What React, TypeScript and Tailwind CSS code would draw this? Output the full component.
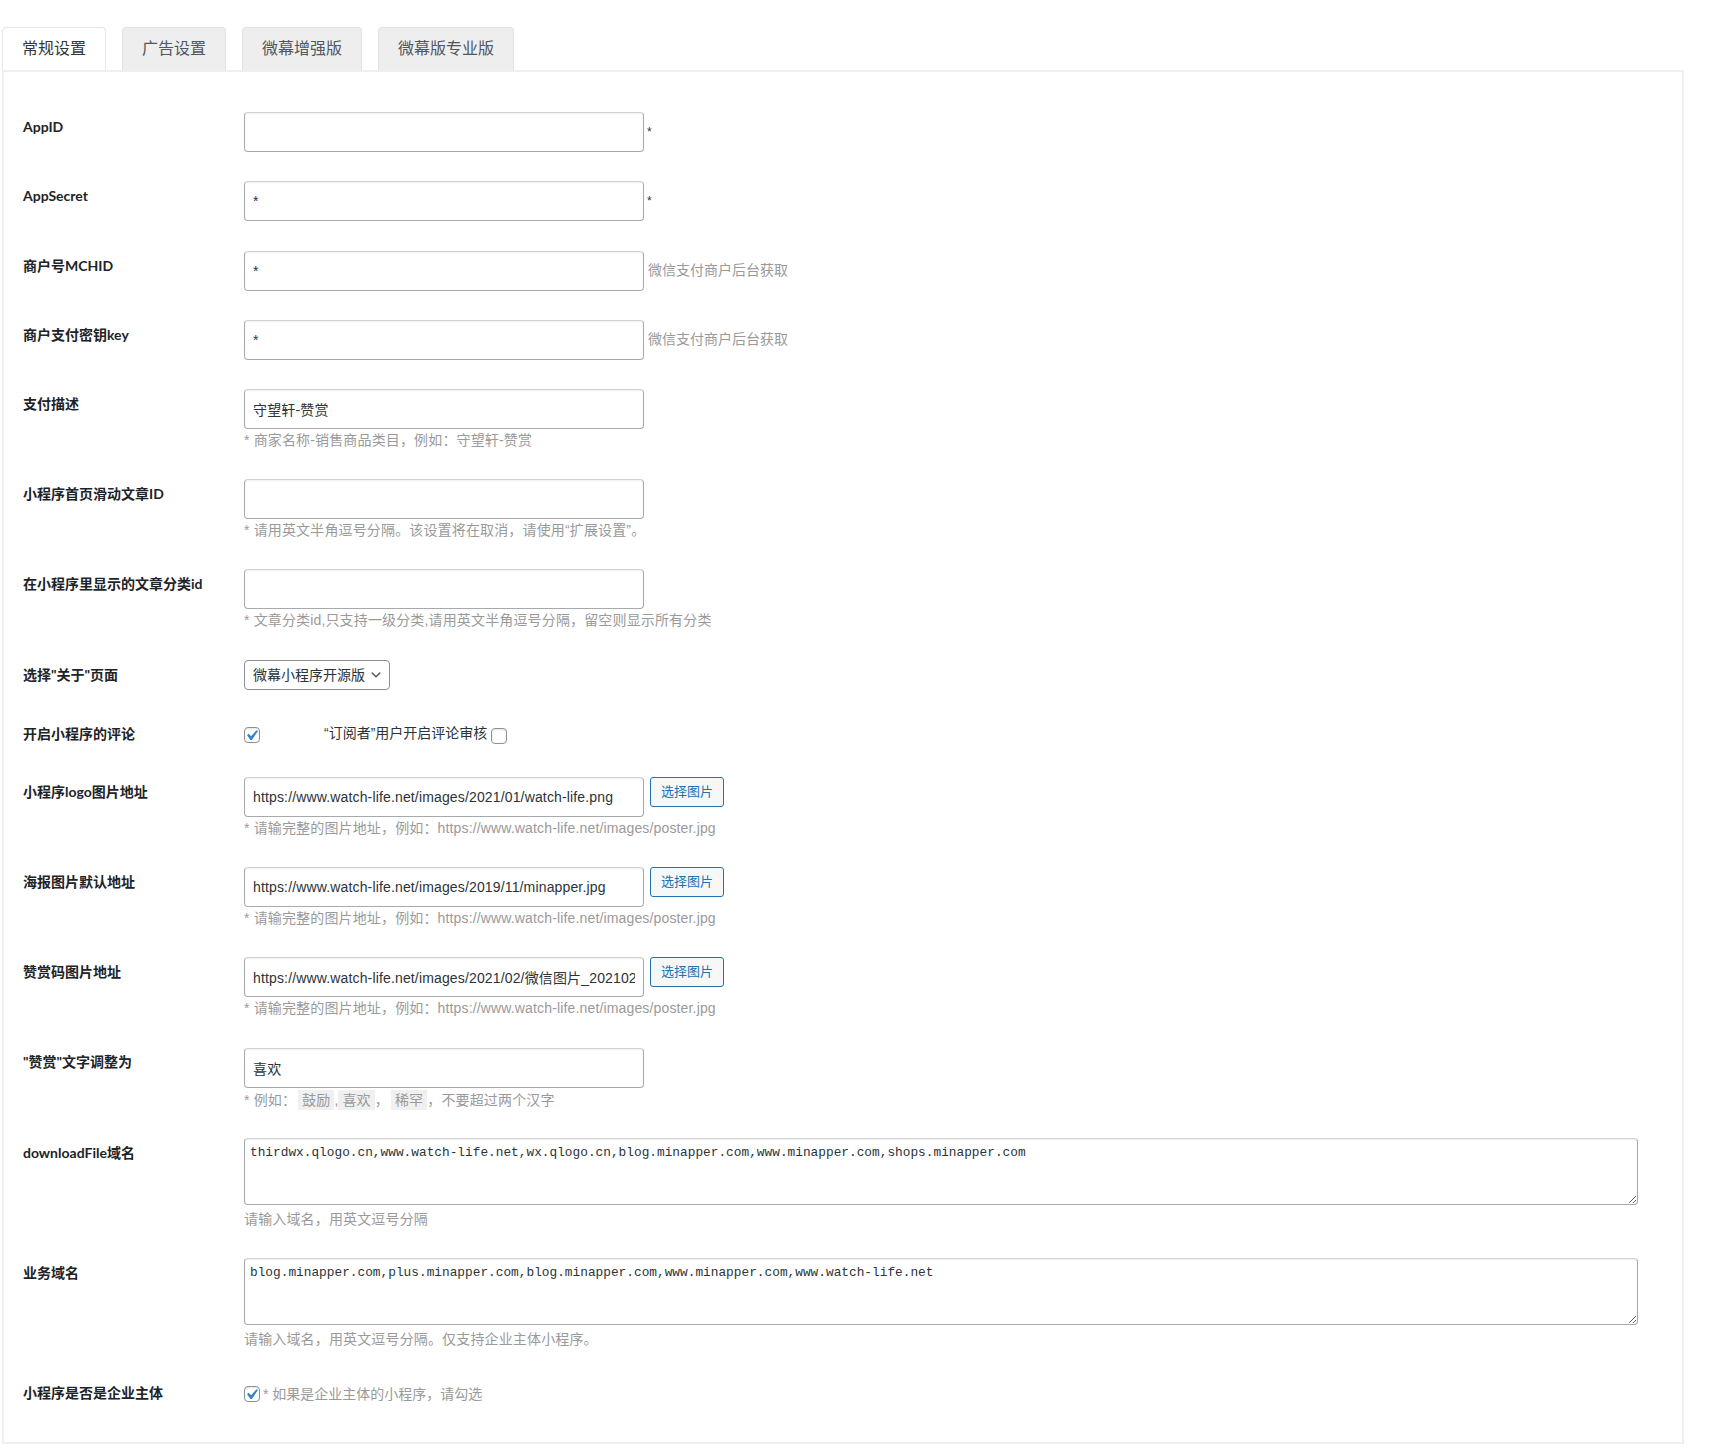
import React from "react";

const FONT = '"Liberation Sans", "Noto Sans CJK SC", sans-serif';
const LABEL_FONT = 'Lato, "Noto Sans CJK SC", sans-serif';

function Row({ label, children }: { label: string; children: React.ReactNode }) {
  return (
    <div className="flex">
      <div
        className="w-[221px] shrink-0 pt-[20.5px] text-[14px] leading-[18px] font-bold text-[#1d2327]"
        style={{ fontFamily: LABEL_FONT }}
      >
        {label}
      </div>
      <div className="py-[14.6px] min-w-0">{children}</div>
    </div>
  );
}

function TextInput({ value = "" }: { value?: string }) {
  return (
    <input
      type="text"
      defaultValue={value}
      className="block w-[400px] h-[40px] px-[8px] rounded-[4px] border border-[#a7aaad] border-t-[#cfd1d4] shadow-[inset_0_1px_2px_rgba(0,0,0,0.06)] bg-white text-[14px] tracking-[0.15px] text-[#2c3338] outline-none"
    />
  );
}

function Help({ children, className = "" }: { children: React.ReactNode; className?: string }) {
  return <p className={`text-[14px] leading-[19px] tracking-[0.15px] text-[#9a9a9a] ${className}`}>{children}</p>;
}

function Chip({ children, className = "" }: { children: React.ReactNode; className?: string }) {
  return (
    <code
      className={`inline-block bg-[#f0f0f1] px-[4px] leading-[20px] text-[14px] text-[#9a9a9a] ${className}`}
      style={{ fontFamily: FONT }}
    >
      {children}
    </code>
  );
}

function Checkbox({ checked }: { checked?: boolean }) {
  return (
    <span className="relative inline-block w-[16px] h-[16px] shrink-0 rounded-[4px] border border-[#8c8f94] bg-white shadow-[inset_0_1px_2px_rgba(0,0,0,0.1)]">
      {checked && (
        <svg className="absolute left-[-4px] top-[-3px] w-[21px] h-[21px]" viewBox="0 0 20 20">
          <path d="M14.83 4.89l1.34.94-5.81 8.38H9.02L5.78 9.67l1.34-1.25 2.57 2.4z" fill="#3582c4" />
        </svg>
      )}
    </span>
  );
}

function PickButton() {
  return (
    <button
      type="button"
      className="ml-[6px] h-[30px] px-[10px] shrink-0 rounded-[3px] border border-[#2271b1] bg-[#f6f7f7] text-[13px] leading-[28px] text-[#2271b1]"
    >
      选择图片
    </button>
  );
}

function DomainArea({ value }: { value: string }) {
  return (
    <textarea
      defaultValue={value}
      className="block w-[1394px] h-[67px] pt-[5px] px-[5px] rounded-[4px] border border-[#a7aaad] border-t-[#cfd1d4] shadow-[inset_0_1px_2px_rgba(0,0,0,0.06)] bg-white text-[12.8px] leading-[18px] text-[#2c3338] outline-none"
      style={{ fontFamily: '"Liberation Mono", monospace' }}
    />
  );
}

const tabs = ["常规设置", "广告设置", "微幕增强版", "微幕版专业版"];

export default function App() {
  return (
    <div className="min-h-[1449px] bg-white pl-[2px] pt-[27px]" style={{ fontFamily: FONT }}>
      {/* tab strip */}
      <div className="flex gap-[16px]">
        {tabs.map((t, i) => (
          <div
            key={t}
            className={
              i === 0
                ? "h-[43px] px-[19px] rounded-t-[4px] border border-b-0 border-[#e6e6e6] bg-white text-[16px] leading-[42px] text-[#32373c]"
                : "h-[43px] px-[19px] rounded-t-[4px] border border-b-0 border-[#e2e2e2] bg-[#eeeeee] text-[16px] leading-[42px] text-[#50575e]"
            }
          >
            {t}
          </div>
        ))}
      </div>

      {/* settings panel */}
      <div className="w-[1682px] border-2 border-[#efefef] bg-white pl-[19px] pt-[25.7px] pb-[20.6px]">
        <Row label="AppID">
          <div className="flex items-center">
            <TextInput />
            <span className="ml-[3px] text-[12px] text-[#2c3338]">*</span>
          </div>
        </Row>
        <Row label="AppSecret">
          <div className="flex items-center">
            <TextInput value="*" />
            <span className="ml-[3px] text-[12px] text-[#2c3338]">*</span>
          </div>
        </Row>
        <Row label="商户号MCHID">
          <div className="flex items-center">
            <TextInput value="*" />
            <span className="ml-[4px] text-[14px] text-[#9a9a9a]">微信支付商户后台获取</span>
          </div>
        </Row>
        <Row label="商户支付密钥key">
          <div className="flex items-center">
            <TextInput value="*" />
            <span className="ml-[4px] text-[14px] text-[#9a9a9a]">微信支付商户后台获取</span>
          </div>
        </Row>
        <Row label="支付描述">
          <TextInput value="守望轩-赞赏" />
          <Help className="mt-[2px]">* 商家名称-销售商品类目，例如：守望轩-赞赏</Help>
        </Row>
        <Row label="小程序首页滑动文章ID">
          <TextInput />
          <Help className="mt-[2px]">* 请用英文半角逗号分隔。该设置将在取消，请使用“扩展设置”。</Help>
        </Row>
        <Row label="在小程序里显示的文章分类id">
          <TextInput />
          <Help className="mt-[2px]">* 文章分类id,只支持一级分类,请用英文半角逗号分隔，留空则显示所有分类</Help>
        </Row>
        <Row label={'选择"关于"页面'}>
          <div className="relative w-[146px] h-[30px] rounded-[4px] border border-[#8c8f94] bg-white pl-[8px] text-[14px] leading-[28px] text-[#2c3338]">
            微幕小程序开源版
            <svg className="absolute right-[6px] top-[7px] w-[14px] h-[14px]" viewBox="0 0 20 20">
              <path d="M5 6l5 5 5-5 2 1-7 7-7-7 2-1z" fill="#555" />
            </svg>
          </div>
        </Row>
        <Row label="开启小程序的评论">
          <div className="flex items-start h-[29px] pt-[8px]">
            <Checkbox checked />
            <span className="ml-[64px] -mt-[2px] text-[14px] leading-[16px] text-[#2c3338]">“订阅者”用户开启评论审核</span>
            <span className="ml-[4px]">
              <Checkbox />
            </span>
          </div>
        </Row>
        <Row label="小程序logo图片地址">
          <div className="flex items-start">
            <TextInput value="https://www.watch-life.net/images/2021/01/watch-life.png" />
            <PickButton />
          </div>
          <Help className="mt-[2px]">* 请输完整的图片地址，例如：https://www.watch-life.net/images/poster.jpg</Help>
        </Row>
        <Row label="海报图片默认地址">
          <div className="flex items-start">
            <TextInput value="https://www.watch-life.net/images/2019/11/minapper.jpg" />
            <PickButton />
          </div>
          <Help className="mt-[2px]">* 请输完整的图片地址，例如：https://www.watch-life.net/images/poster.jpg</Help>
        </Row>
        <Row label="赞赏码图片地址">
          <div className="flex items-start">
            <TextInput value="https://www.watch-life.net/images/2021/02/微信图片_20210208091536.jpg" />
            <PickButton />
          </div>
          <Help className="mt-[2px]">* 请输完整的图片地址，例如：https://www.watch-life.net/images/poster.jpg</Help>
        </Row>
        <Row label={'"赞赏"文字调整为'}>
          <TextInput value="喜欢" />
          <Help className="mt-[2px] h-[19px]">
            * 例如：<Chip className="ml-[2px]">鼓励</Chip>,<Chip>喜欢</Chip>，<Chip className="ml-[2px]">稀罕</Chip>，不要超过两个汉字
          </Help>
        </Row>
        <Row label="downloadFile域名">
          <DomainArea value="thirdwx.qlogo.cn,www.watch-life.net,wx.qlogo.cn,blog.minapper.com,www.minapper.com,shops.minapper.com" />
          <Help className="mt-[5px]">请输入域名，用英文逗号分隔</Help>
        </Row>
        <Row label="业务域名">
          <DomainArea value="blog.minapper.com,plus.minapper.com,blog.minapper.com,www.minapper.com,www.watch-life.net" />
          <Help className="mt-[5px]">请输入域名，用英文逗号分隔。仅支持企业主体小程序。</Help>
        </Row>
        <Row label="小程序是否是企业主体">
          <div className="flex items-start h-[29px] pt-[8px]">
            <Checkbox checked />
            <span className="ml-[3px] text-[14px] leading-[16px] text-[#9a9a9a]">* 如果是企业主体的小程序，请勾选</span>
          </div>
        </Row>
      </div>
    </div>
  );
}
